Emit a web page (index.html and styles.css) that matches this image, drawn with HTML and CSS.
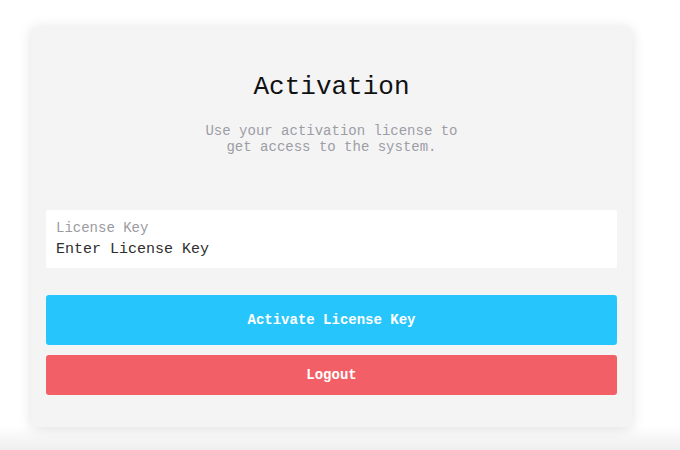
FILE: index.html
```html
<!DOCTYPE html>
<html lang="en">
<head>
    <meta charset="UTF-8">
    <title>Activation</title>
    <link rel="stylesheet" href="styles.css">
</head>
<body>
    <div class="card">
        <h1>Activation</h1>
        <p class="subtitle">Use your activation license to<br>get access to the system.</p>

        <div class="field">
            <label for="licenseKey">License Key</label>
            <input type="text" id="licenseKey" placeholder="Enter License Key">
        </div>

        <button class="btn btn-activate">Activate License Key</button>
        <button class="btn btn-logout">Logout</button>
    </div>
</body>
</html>
```

FILE: styles.css
```css
html { height: 100%; background: linear-gradient(to bottom, #fff 0, #fff 426px, #efefef 100%); }
body { margin: 0; height: 100%; font-family: "Liberation Mono", "Courier New", monospace; }
.card { box-sizing: border-box; width: 601px; margin: 26px 0 0 31px; padding: 46px 15px 32px; background: #f4f4f5; border-radius: 6px; box-shadow: 0 2px 14px rgba(0, 0, 0, 0.12); }
h1 { margin: 0; font-size: 26px; line-height: 30px; font-weight: normal; color: #111; text-align: center; }
.subtitle { margin: 21px 0 0; font-size: 14px; line-height: 16px; color: #9d9da5; text-align: center; }
.field { margin-top: 55px; padding: 9px 10px 7px; background: #fff; border-radius: 2px; }
.field label { display: block; font-size: 14px; line-height: 18px; color: #9a9aa0; }
.field input { display: block; width: 100%; margin: 2px 0 0; padding: 0; border: none; outline: none; background: transparent; font-family: inherit; font-size: 15px; line-height: 22px; height: 22px; color: #333; }
.field input::placeholder { color: #2e2e2e; opacity: 1; }
.btn { display: block; width: 100%; border: none; border-radius: 3px; color: #fff; font-family: inherit; font-size: 14px; font-weight: bold; cursor: pointer; }
.btn-activate { margin-top: 27px; height: 50px; background: #26c6fd; }
.btn-logout { margin-top: 10px; height: 40px; background: #f25f66; }
```
